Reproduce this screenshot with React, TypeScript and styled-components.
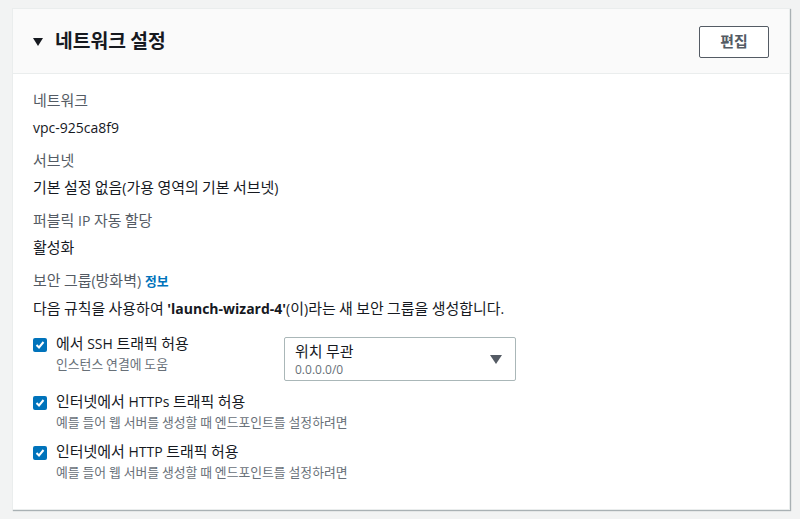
import React from 'react';
import styled, { createGlobalStyle } from 'styled-components';

const GlobalStyle = createGlobalStyle`
    html, body {
        margin: 0;
        padding: 0;
        background: #f2f3f3;
    }
    body {
        font-family: 'Open Sans', 'Noto Sans CJK KR', sans-serif;
        color: #16191f;
        font-size: 14px;
    }
`;

// Hangul in the reference runs a bit wider than Noto CJK, so scale those runs
const Hangul = styled.span`
    font-family: 'Noto Sans CJK KR', sans-serif;
    font-size: 1.07em;
    line-height: 1;
`;

const hangulRun = /([ㄱ-ㅎ가-힣][ㄱ-ㅎ가-힣 ]*[ㄱ-ㅎ가-힣]|[ㄱ-ㅎ가-힣])/;

function K({ children }: { children: string }) {
    const parts = children.split(hangulRun);
    return (
        <>
            {parts.map((part, i) => (i % 2 === 1 ? <Hangul key={i}>{part}</Hangul> : part))}
        </>
    );
}

const Page = styled.div`
    padding: 8px 10px 8px 12px;
`;

const Card = styled.section`
    background: #ffffff;
    border: 1px solid #eaeded;
    box-shadow: 1px 1px 1px 0 rgba(0, 28, 36, 0.3);
    height: 502px;
    box-sizing: border-box;
`;

const Header = styled.header`
    display: flex;
    align-items: center;
    justify-content: space-between;
    height: 65px;
    padding: 0 20px;
    background: #fafafa;
    border-bottom: 1px solid #eaeded;
    box-sizing: border-box;
`;

const Title = styled.h2`
    display: flex;
    align-items: center;
    gap: 12px;
    margin: 0;
    font-size: 18px;
    font-weight: 700;
    color: #16191f;
`;

const Caret = styled.span`
    width: 0;
    height: 0;
    border-left: 5px solid transparent;
    border-right: 5px solid transparent;
    border-top: 8px solid #16191f;
    margin-top: 2px;
`;

const EditButton = styled.button`
    width: 70px;
    height: 32px;
    background: #ffffff;
    border: 1px solid #545b64;
    border-radius: 2px;
    font-family: inherit;
    font-size: 14px;
    font-weight: 700;
    color: #545b64;
    margin-top: 1px;
`;

const Body = styled.div`
    padding: 16px 20px 20px 20px;
`;

const Field = styled.div`
    display: flex;
    flex-direction: column;
    margin-bottom: 11px;
`;

const Label = styled.div`
    color: #545b64;
    line-height: 22px;
    margin-bottom: 5px;
`;

const Value = styled.div`
    color: #16191f;
    line-height: 22px;
`;

const InfoLink = styled.span`
    color: #0073bb;
    font-weight: 700;
    font-size: 12px;
    margin-left: 4px;
`;

const RuleList = styled.div`
    display: flex;
    flex-direction: column;
    gap: 10px;
    margin-top: 13px;
`;

const Rule = styled.div`
    display: flex;
    align-items: flex-start;
`;

const Check = styled.span`
    width: 14px;
    height: 14px;
    border-radius: 2px;
    background: #0073bb;
    display: flex;
    align-items: center;
    justify-content: center;
    margin-top: 5px;
    flex: none;
`;

const RuleText = styled.div<{ $width?: number }>`
    display: flex;
    flex-direction: column;
    margin-left: 9px;
    width: ${(p) => (p.$width ? `${p.$width}px` : 'auto')};
`;

const RuleTitle = styled.div`
    line-height: 22px;
`;

const RuleHint = styled.div`
    font-size: 12px;
    color: #687078;
    line-height: 17px;
    margin-top: 1px;
`;

const Select = styled.div`
    width: 232px;
    height: 44px;
    box-sizing: border-box;
    border: 1px solid #aab7b8;
    border-radius: 2px;
    display: flex;
    align-items: center;
    justify-content: space-between;
    padding: 1px 13px 0 10px;
    margin-top: 4px;
`;

const SelectText = styled.div`
    display: flex;
    flex-direction: column;
`;

const SelectTitle = styled.div`
    line-height: 19px;
`;

const SelectSub = styled.div`
    font-size: 12px;
    color: #687078;
    line-height: 17px;
`;

const SelectCaret = styled.span`
    width: 0;
    height: 0;
    border-left: 6px solid transparent;
    border-right: 6px solid transparent;
    border-top: 9px solid #545b64;
`;

function CheckMark() {
    return (
        <Check>
            <svg width='10' height='10' viewBox='0 0 10 10'>
                <polyline points='1.5,5 4,7.5 8.5,2' fill='none' stroke='#ffffff' strokeWidth='2' />
            </svg>
        </Check>
    );
}

const rules = [
    { title: '에서 SSH 트래픽 허용', hint: '인스턴스 연결에 도움', select: true },
    { title: '인터넷에서 HTTPs 트래픽 허용', hint: '예를 들어 웹 서버를 생성할 때 엔드포인트를 설정하려면' },
    { title: '인터넷에서 HTTP 트래픽 허용', hint: '예를 들어 웹 서버를 생성할 때 엔드포인트를 설정하려면' },
];

export default function App() {
    return (
        <>
            <GlobalStyle />
            <Page>
                <Card>
                    <Header>
                        <Title>
                            <Caret />
                            <K>네트워크 설정</K>
                        </Title>
                        <EditButton>
                            <K>편집</K>
                        </EditButton>
                    </Header>
                    <Body>
                        <Field>
                            <Label>
                                <K>네트워크</K>
                            </Label>
                            <Value>vpc-925ca8f9</Value>
                        </Field>
                        <Field>
                            <Label>
                                <K>서브넷</K>
                            </Label>
                            <Value>
                                <K>기본 설정 없음(가용 영역의 기본 서브넷)</K>
                            </Value>
                        </Field>
                        <Field>
                            <Label>
                                <K>퍼블릭 IP 자동 할당</K>
                            </Label>
                            <Value>
                                <K>활성화</K>
                            </Value>
                        </Field>
                        <Field>
                            <Label>
                                <K>보안 그룹(방화벽)</K>
                                <InfoLink>
                                    <K>정보</K>
                                </InfoLink>
                            </Label>
                            <Value>
                                <K>다음 규칙을 사용하여 </K>
                                <b>'launch-wizard-4'</b>
                                <K>(이)라는 새 보안 그룹을 생성합니다.</K>
                            </Value>
                        </Field>
                        <RuleList>
                            {rules.map((r) => (
                                <Rule key={r.title}>
                                    <CheckMark />
                                    <RuleText $width={r.select ? 228 : undefined}>
                                        <RuleTitle>
                                            <K>{r.title}</K>
                                        </RuleTitle>
                                        <RuleHint>
                                            <K>{r.hint}</K>
                                        </RuleHint>
                                    </RuleText>
                                    {r.select && (
                                        <Select>
                                            <SelectText>
                                                <SelectTitle>
                                                    <K>위치 무관</K>
                                                </SelectTitle>
                                                <SelectSub>0.0.0.0/0</SelectSub>
                                            </SelectText>
                                            <SelectCaret />
                                        </Select>
                                    )}
                                </Rule>
                            ))}
                        </RuleList>
                    </Body>
                </Card>
            </Page>
        </>
    );
}
